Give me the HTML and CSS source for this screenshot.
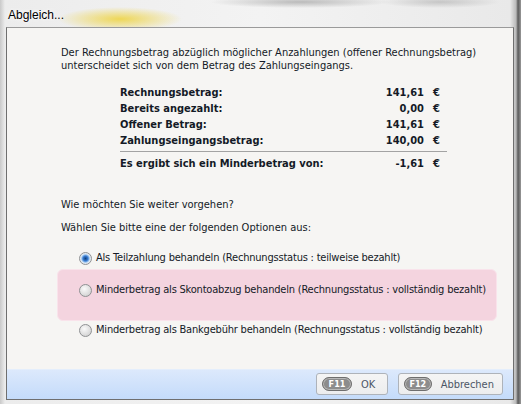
FILE: index.html
```html
<!DOCTYPE html>
<html lang="de">
<head>
    <meta charset="UTF-8">
    <title>Abgleich...</title>
    <link rel="stylesheet" href="styles.css">
</head>
<body>
<div class="window">
    <div class="titlebar">Abgleich...</div>

    <div class="client">
        <div class="content">
            <p class="intro">Der Rechnungsbetrag abzüglich möglicher Anzahlungen (offener Rechnungsbetrag)<br>
            unterscheidet sich von dem Betrag des Zahlungseingangs.</p>

            <div class="sums">
                <span>Rechnungsbetrag:</span><span class="num">141,61</span><span class="cur">€</span>
                <span>Bereits angezahlt:</span><span class="num">0,00</span><span class="cur">€</span>
                <span>Offener Betrag:</span><span class="num">141,61</span><span class="cur">€</span>
                <span>Zahlungseingangsbetrag:</span><span class="num">140,00</span><span class="cur">€</span>
                <div class="rule"></div>
                <span>Es ergibt sich ein Minderbetrag von:</span><span class="num">-1,61</span><span class="cur">€</span>
            </div>

            <p class="question">Wie möchten Sie weiter vorgehen?</p>
            <p class="question second">Wählen Sie bitte eine der folgenden Optionen aus:</p>

            <div class="options">
                <label class="option"><span class="radio checked"></span>Als Teilzahlung behandeln (Rechnungsstatus : teilweise bezahlt)</label>
                <label class="option hover"><span class="radio"></span>Minderbetrag als Skontoabzug behandeln (Rechnungsstatus : vollständig bezahlt)</label>
                <label class="option"><span class="radio"></span>Minderbetrag als Bankgebühr behandeln (Rechnungsstatus : vollständig bezahlt)</label>
            </div>
        </div>

        <div class="footer">
            <button class="btn ok"><span class="key">F11</span>OK</button>
            <button class="btn cancel"><span class="key">F12</span>Abbrechen</button>
        </div>
    </div>
</div>
</body>
</html>
```

FILE: styles.css
```css
body { margin: 0; font-family: "DejaVu Sans Condensed", "DejaVu Sans", sans-serif; font-size: 11px; color: #141a26; }
p { margin: 0; }

/* glass frame */
.window {
    width: 521px; height: 404px; overflow: hidden; box-sizing: border-box;
    background:
        radial-gradient(ellipse 62px 12px at 120px 19px, rgba(238, 212, 70, 0.9), rgba(238, 212, 70, 0) 100%),
        radial-gradient(ellipse 90px 6px at 300px 2px, rgba(150, 150, 150, 0.6), rgba(150, 150, 150, 0) 100%),
        radial-gradient(ellipse 60px 6px at 440px 2px, rgba(160, 160, 160, 0.5), rgba(160, 160, 160, 0) 100%),
        linear-gradient(90deg, #c9c9c9 0, #ececec 5px, #f3f3f3 50%, #e9e9e9 510px, #b9b9b9 516px, #5a5a5a 518px, #9a9a9a 521px);
}
.titlebar { height: 27px; box-sizing: border-box; padding: 8px 0 0 8px; font-family: "Liberation Sans", sans-serif; font-size: 12px; line-height: 14px; color: #000; text-shadow: 0 0 6px #fff, 0 0 3px #fff; }

.client {
    margin-left: 6px; width: 508px; height: 373px; box-sizing: border-box;
    border: 1px solid #6f6f6f; border-top-color: #9a9a9a;
    background: #f6f5f3; display: flex; flex-direction: column;
}
.content { flex: 1; padding: 18px 0 0 54px; }
.intro { line-height: 13px; }

.sums {
    display: grid; grid-template-columns: 1fr auto 23px;
    width: 327px; margin: 13px 0 0 59px;
    font-weight: bold; line-height: 16px;
}
.sums .num { text-align: right; }
.sums .cur { text-align: right; padding-right: 7px; }
.rule { grid-column: 1 / -1; height: 1px; background: #a3a3a3; margin: 2px 0 4px; }

.question { margin-top: 26px; line-height: 14px; }
.question.second { margin-top: 9px; }

.options { margin: 15px 0 0 -4px; width: 440px; letter-spacing: -0.2px; }
.option { display: flex; align-items: center; height: 16px; padding-left: 22px; line-height: 16px; white-space: nowrap; }
.option.hover {
    height: 52px; box-sizing: border-box; align-items: flex-start; padding: 12px 0 0 21px;
    margin: 3px 0 1px; background: #f4d4df; border: 1px solid #f9e3eb; border-radius: 6px;
}
.radio {
    width: 11px; height: 11px; border-radius: 50%; margin: 2px 4px 0 0; flex: none;
    border: 1px solid #8f9193; background: radial-gradient(circle at 40% 35%, #fafafa, #d8d8d8 70%, #c4c4c4);
}
.option:not(.hover) .radio { margin-top: 0; }
.radio.checked { background: radial-gradient(circle, #0b3f7c 0, #3a7bd1 2.5px, #7fb3ea 3.5px, #d6e4f3 4.5px, #f0f0f0 6px); }

.footer {
    height: 30px; box-sizing: border-box; padding: 3px 10px 0 0;
    display: flex; justify-content: flex-end; gap: 10px;
    background: linear-gradient(#dce9fc, #c4dbfa); border-top: 1px solid #e4eefc;
}
.btn {
    height: 22px; display: flex; align-items: center; gap: 9px; padding: 0 8px 0 5px;
    font-family: inherit; font-size: 11px; color: #4c5666;
    border: 1px solid #aeb3ba; border-radius: 3px; background: linear-gradient(#f5f5f5, #ecedee);
}
.btn.ok { width: 72px; }
.btn.cancel { width: 105px; }
.key {
    width: 28px; height: 12px; border-radius: 7px; background: #8c8c8c;
    border: 1px solid #6e6e6e; box-shadow: inset 0 0 0 1px #b8b8b8;
    color: #fff; font-weight: bold; font-size: 9px; line-height: 12px; text-align: center;
}
```
